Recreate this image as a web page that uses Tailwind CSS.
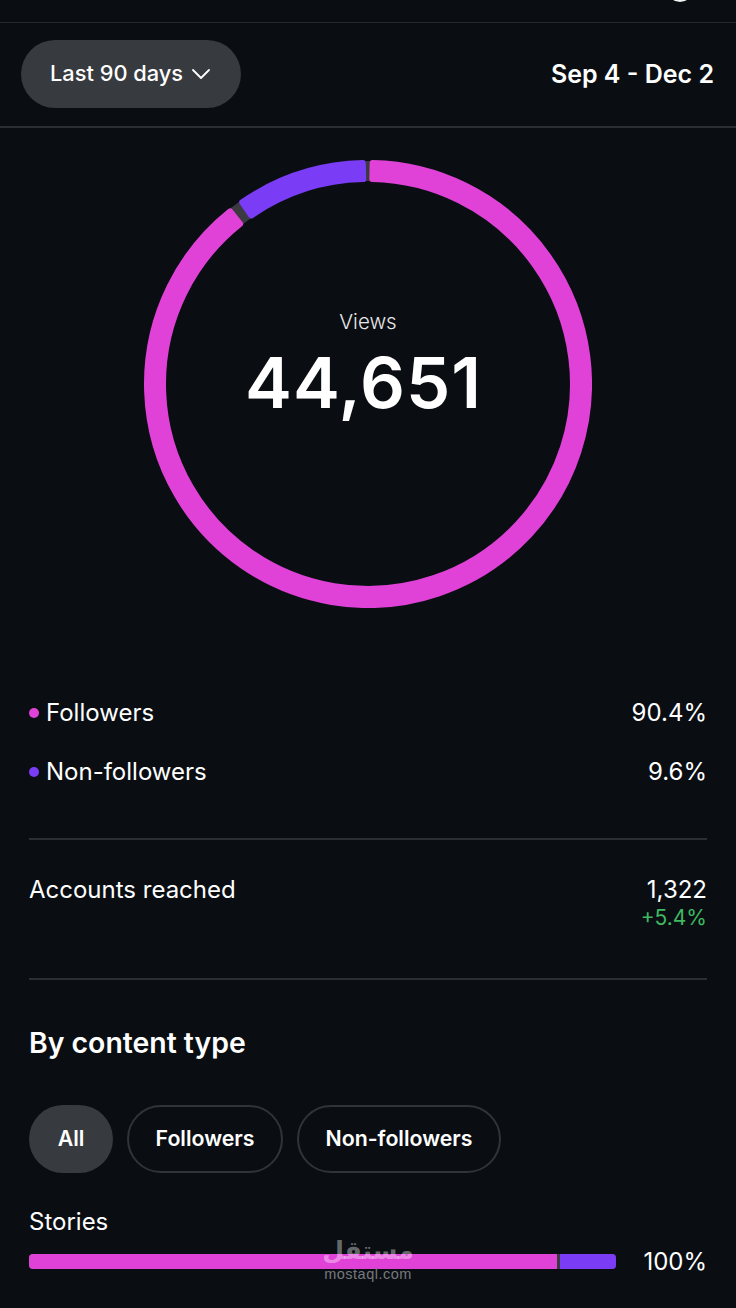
<!DOCTYPE html>
<html lang="en">
<head>
    <meta charset="UTF-8">
    <title>Views</title>
    <script src="https://cdn.jsdelivr.net/npm/@tailwindcss/browser@4"></script>
</head>
<body class="bg-[#0a0e13] text-white font-['Inter',sans-serif]">
    <div class="relative w-[736px] h-[1308px] overflow-hidden">
        <!-- Top bar -->
        <div class="relative h-[23px] border-b border-[#25282c]">
            <div class="absolute left-[665px] top-[-14px] w-[30px] h-[16px] rounded-b-full bg-[#f2f2f2] [clip-path:ellipse(50%_100%_at_50%_0)]"></div>
        </div>

        <!-- Range header -->
        <div class="h-[105px] border-b-2 border-[#2a2d31] pl-[21px] pr-[22px] flex items-center justify-between">
            <button class="w-[220px] h-[68px] -mt-[2px] rounded-full bg-[#373a3e] flex items-center pl-[29px] gap-[8px] text-[21.8px] font-medium">
                Last 90 days
                <svg width="20" height="12" viewBox="0 0 20 12" fill="none" stroke="white" stroke-width="1.8" stroke-linecap="round" stroke-linejoin="round"><path d="M2 2l8 8 8-8"/></svg>
            </button>
            <span class="text-[25px] font-semibold">Sep 4 - Dec 2</span>
        </div>

        <!-- Ring -->
        <div class="relative w-[448px] h-[448px] mx-auto mt-[32px]">
            <svg width="448" height="448" viewBox="0 0 448 448">
                <circle cx="224" cy="224" r="213" fill="none" stroke="#3a3a40" stroke-width="20"/>
                <path fill="#e042d8" stroke="#e042d8" stroke-width="6" stroke-linejoin="round" d="M228.67 3.05A221 221 0 1 1 86.10 51.31L96.08 63.81A205 205 0 1 0 228.33 19.05Z"/>
                <path fill="#7a3cf5" stroke="#7a3cf5" stroke-width="6" stroke-linejoin="round" d="M98.23 42.27A221 221 0 0 1 218.79 3.06L219.17 19.06A205 205 0 0 0 107.33 55.43Z"/>
            </svg>
            <div class="absolute inset-0 flex flex-col items-center pt-[148px]">
                <span class="text-[20.5px] leading-[28px] font-light text-[#e8e8ea]">Views</span>
                <span class="text-[70.4px] leading-[80px] font-semibold tracking-[1px] mt-[7px] mr-[9px]">44,651</span>
            </div>
        </div>

        <div class="px-[29px]">
            <!-- Legend -->
            <div class="mt-[89px] flex flex-col gap-[27px] text-[24px] leading-[32px] font-normal">
                <div class="flex items-center justify-between">
                    <span class="flex items-center gap-[7px]"><i class="w-[10px] h-[10px] rounded-full bg-[#e042d8]"></i>Followers</span>
                    <span>90.4%</span>
                </div>
                <div class="flex items-center justify-between">
                    <span class="flex items-center gap-[7px]"><i class="w-[10px] h-[10px] rounded-full bg-[#7a3cf5]"></i>Non-followers</span>
                    <span>9.6%</span>
                </div>
            </div>

            <div class="mt-[50px] h-[2px] bg-[#2a2d31]"></div>

            <!-- Accounts reached -->
            <div class="h-[138px] pt-[34px] flex justify-between font-normal">
                <span class="text-[24px] leading-[32px]">Accounts reached</span>
                <div class="flex flex-col items-end">
                    <span class="text-[24px] leading-[32px]">1,322</span>
                    <span class="text-[21px] leading-[24px] text-[#3fb85f]">+5.4%</span>
                </div>
            </div>

            <div class="h-[2px] bg-[#2a2d31]"></div>

            <!-- By content type -->
            <h2 class="mt-[46px] text-[28.4px] leading-[34px] font-semibold">By content type</h2>
            <div class="mt-[45px] flex gap-[14px] text-[21.3px] font-semibold">
                <span class="w-[84px] h-[68px] rounded-full bg-[#373a3e] flex items-center justify-center">All</span>
                <span class="w-[156px] h-[68px] rounded-full border-2 border-[#303338] flex items-center justify-center">Followers</span>
                <span class="w-[204px] h-[68px] rounded-full border-2 border-[#303338] flex items-center justify-center">Non-followers</span>
            </div>

            <div class="mt-[33px] text-[24px] leading-[32px] font-normal">Stories</div>
            <div class="mt-[6px] flex items-center justify-between">
                <div class="w-[587px] h-[15px] rounded-[4px] overflow-hidden flex bg-[#3a3a40] gap-[3px]">
                    <div class="h-full w-[528px] bg-[#e042d8]"></div>
                    <div class="h-full flex-1 bg-[#7a3cf5]"></div>
                </div>
                <span class="text-[24px] leading-[32px] font-normal mt-[2px]">100%</span>
            </div>
        </div>

        <!-- Watermark -->
        <div class="absolute left-[268px] top-[1236px] w-[200px] flex flex-col items-center">
            <span dir="rtl" class="font-['DejaVu_Sans',sans-serif] font-bold text-[25px] leading-[30px] text-white/40">مستقل</span>
            <span class="font-['Liberation_Sans',sans-serif] text-[14.5px] leading-[16px] text-[#77797d] tracking-[0.5px]">mostaql.com</span>
        </div>
    </div>
</body>
</html>
